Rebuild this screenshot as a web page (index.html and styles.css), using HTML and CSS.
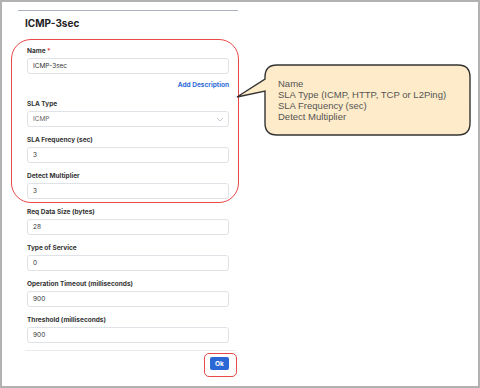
FILE: index.html
```html
<!DOCTYPE html>
<html lang="en">
<head>
  <meta charset="UTF-8" />
  <title>ICMP-3sec</title>
  <link rel="stylesheet" href="styles.css">
</head>
<body>
  <div class="frame">
    <div class="panel">
      <h2 class="title">ICMP-3sec</h2>

      <div class="field">
        <label>Name <span class="req">*</span></label>
        <div class="input">ICMP-3sec</div>
      </div>
      <div class="add-desc"><a href="#">Add Description</a></div>

      <div class="field">
        <label>SLA Type</label>
        <div class="input select">ICMP
          <svg class="chev" width="8" height="5" viewBox="0 0 8 5"><path d="M1 1l3 3 3-3" fill="none" stroke="#b8bcc4" stroke-width="0.8"/></svg>
        </div>
      </div>
      <div class="field">
        <label>SLA Frequency (sec)</label>
        <div class="input">3</div>
      </div>
      <div class="field">
        <label>Detect Multiplier</label>
        <div class="input">3</div>
      </div>
      <div class="field">
        <label>Req Data Size (bytes)</label>
        <div class="input">28</div>
      </div>
      <div class="field">
        <label>Type of Service</label>
        <div class="input">0</div>
      </div>
      <div class="field">
        <label>Operation Timeout (milliseconds)</label>
        <div class="input">900</div>
      </div>
      <div class="field">
        <label>Threshold (milliseconds)</label>
        <div class="input">900</div>
      </div>

      <div class="footer">
        <button class="ok">Ok</button>
      </div>
    </div>

    <!-- annotation overlays -->
    <div class="mark mark-fields"></div>
    <div class="mark mark-ok"></div>
    <svg class="callout" width="480" height="388" viewBox="0 0 480 388">
      <path d="M277 65H458Q470 65 470 77V123Q470 135 458 135H277Q265 135 265 123V91L237 97L265 79V77Q265 65 277 65Z" fill="#fdebc9" stroke="#333" stroke-width="1.4"/>
    </svg>
    <div class="callout-text">
      Name<br>
      SLA Type (ICMP, HTTP, TCP or L2Ping)<br>
      SLA Frequency (sec)<br>
      Detect Multiplier
    </div>
  </div>
</body>
</html>
```

FILE: styles.css
```css
body {
  margin: 0;
  background: #fff;
  font-family: Inter, "Noto Sans", sans-serif;
  color: #2b2d31;
}
.frame {
  position: relative;
  width: 480px;
  height: 388px;
  box-sizing: border-box;
  border: 2px solid #b2b2b2;
  padding-top: 8px;
}
.panel {
  margin-left: 16px;
  width: 220px;
  border-top: 1px solid #a9b1bf;
}
.title {
  margin: 5px 0 16px 7px;
  font-size: 10px;
  line-height: 14px;
  font-weight: 700;
  color: #222;
}
.field {
  margin-left: 9px;
  width: 202px;
  margin-bottom: 8px;
}
.field label {
  display: block;
  font-size: 6.5px;
  line-height: 10px;
  font-weight: 700;
  color: #333;
  margin-bottom: 2px;
}
.req {
  color: #e0383b;
}
.input {
  height: 16px;
  box-sizing: border-box;
  border: 1px solid #dfe2e6;
  border-radius: 3px;
  padding-left: 5px;
  font-size: 6.5px;
  line-height: 14px;
  color: #333;
  display: flex;
  align-items: center;
}
.select {
  justify-content: space-between;
  padding-right: 4px;
  color: #666;
}
.add-desc {
  margin: -2px 0 9px 9px;
  width: 202px;
  text-align: right;
  font-size: 6.5px;
  line-height: 10px;
  font-weight: 700;
}
.add-desc a {
  color: #2f6bd8;
  text-decoration: none;
}
.footer {
  margin: -1px 0 0 7px;
  width: 211px;
  border-top: 1px solid #e8eaee;
  padding-top: 6px;
  display: flex;
  justify-content: flex-end;
  padding-right: 7px;
  box-sizing: border-box;
}
.ok {
  width: 19px;
  height: 13px;
  padding: 0;
  border: none;
  border-radius: 2px;
  background: #2c67d6;
  color: #fff;
  font-family: Inter, sans-serif;
  font-size: 6.5px;
  font-weight: 700;
}
.mark {
  position: absolute;
  border: 1px solid #e8484a;
  box-sizing: border-box;
}
.mark-fields {
  left: 9px;
  top: 37px;
  width: 228px;
  height: 164px;
  border-radius: 20px;
}
.mark-ok {
  left: 202px;
  top: 351px;
  width: 33px;
  height: 24px;
  border-radius: 5px;
}
.callout {
  position: absolute;
  left: -2px;
  top: -2px;
  pointer-events: none;
}
.callout-text {
  position: absolute;
  left: 276px;
  top: 76px;
  font-family: "Liberation Sans", Arial, sans-serif;
  font-size: 9.5px;
  line-height: 11px;
  color: #555;
}
```
